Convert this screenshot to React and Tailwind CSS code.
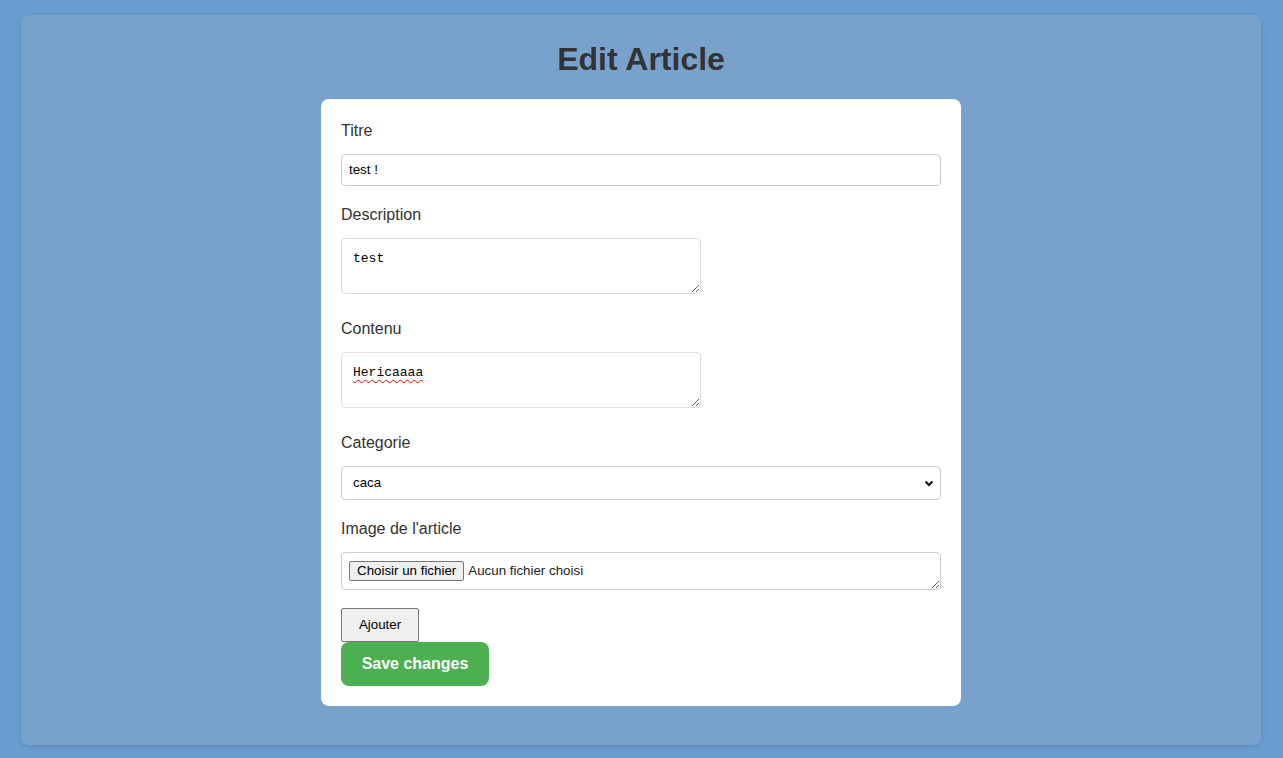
import React from "react";

export default function App() {
  const font = { fontFamily: '"Liberation Sans", Arial, sans-serif' };
  return (
    <div className="min-h-[758px] w-full bg-[#6a9ed1] pt-[15px] pb-[13px]" style={font}>
      <div className="ml-[21px] w-[1240px] h-[730px] rounded-[8px] bg-[#78a1cc] pt-[26px] shadow-[0_2px_6px_rgba(0,0,0,0.12)] flex flex-col items-center">
        <h1 className="text-[32px] leading-[37px] font-bold text-[#333] mb-[21px]">Edit Article</h1>
        <div className="w-[640px] bg-white rounded-[8px] px-[20px] pt-[23px] pb-[20px] flex flex-col items-start">
          <label className="block text-[16px] leading-[18px] text-[#333]">Titre</label>
          <div className="mt-[14px] w-[600px] h-[32px] border border-[#ccc] rounded-[4px] pl-[7px] flex items-center text-[13.33px] text-black">
            test !
          </div>

          <label className="block mt-[20px] text-[16px] leading-[18px] text-[#333]">Description</label>
          <div className="mt-[14px] w-[360px] h-[56px] border border-[#ddd] rounded-[4px] px-[11px] pt-[12px] resize-y overflow-auto text-[13px] leading-[15px] text-black" style={{ fontFamily: '"Liberation Mono", "DejaVu Sans Mono", monospace' }}>
            test
          </div>

          <label className="block mt-[26px] text-[16px] leading-[18px] text-[#333]">Contenu</label>
          <div className="mt-[14px] w-[360px] h-[56px] border border-[#ddd] rounded-[4px] px-[11px] pt-[12px] resize-y overflow-auto text-[13px] leading-[15px] text-black" style={{ fontFamily: '"Liberation Mono", "DejaVu Sans Mono", monospace' }}>
            <span className="underline decoration-wavy decoration-[#e00] decoration-1 underline-offset-[3px]">Hericaaaa</span>
          </div>

          <label className="block mt-[26px] text-[16px] leading-[18px] text-[#333]">Categorie</label>
          <div className="mt-[14px] w-[600px] h-[34px] border border-[#ccc] rounded-[4px] pl-[11px] pr-[5px] flex items-center justify-between text-[13.33px] text-black">
            <span>caca</span>
            <svg width="12" height="12" viewBox="0 0 12 12">
              <path d="M2.5 4.5 L6 8 L9.5 4.5" fill="none" stroke="#111" strokeWidth="2" />
            </svg>
          </div>

          <label className="block mt-[20px] text-[16px] leading-[18px] text-[#333]">Image de l'article</label>
          <div className="mt-[14px] w-[600px] h-[38px] border border-[#ccc] rounded-[4px] pl-[7px] pt-[8px] resize-y overflow-auto flex items-start text-[13.33px]">
            <span className="h-[20px] px-[7px] border border-[#767676] bg-[#efefef] rounded-[2px] text-black flex items-center leading-none">Choisir un fichier</span>
            <span className="ml-[4px] h-[20px] flex items-center text-[#222]">Aucun fichier choisi</span>
          </div>

          <button className="mt-[18px] w-[78px] h-[34px] border border-[#767676] bg-[#efefef] rounded-[2px] text-[13.33px] text-black">Ajouter</button>
          <button className="w-[148px] h-[44px] bg-[#4caf50] rounded-[8px] text-white font-bold text-[16px]">Save changes</button>
        </div>
      </div>
    </div>
  );
}
